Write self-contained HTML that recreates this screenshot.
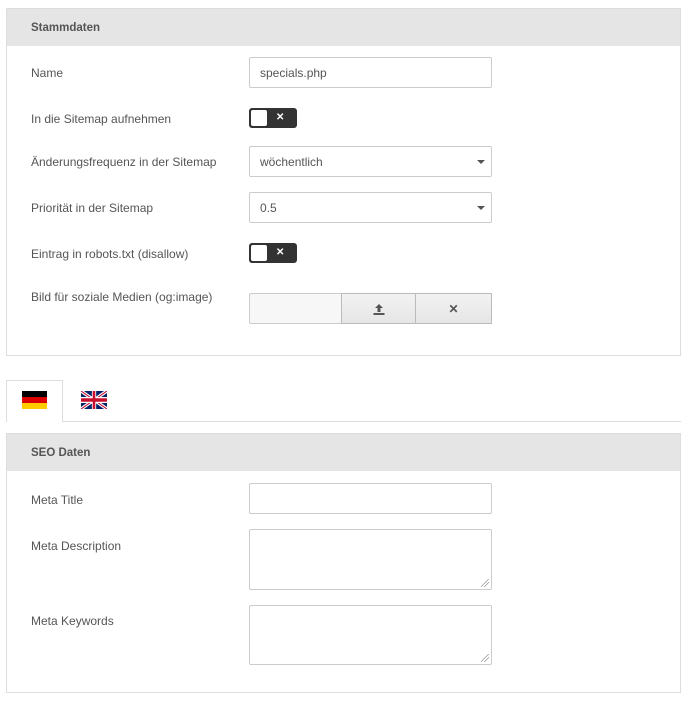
<!DOCTYPE html><html><head><style>
body{margin:0;background:#fff;font-family:"Liberation Sans",Arial,sans-serif;font-size:12px;color:#555;width:698px;height:701px;position:relative;overflow:hidden}
.a{position:absolute}
.panel{position:absolute;left:6px;width:673px;border:1px solid #ddd;background:#fff}
.hd{height:37px;background:#e5e5e5;font-weight:bold;font-size:11.5px;color:#555;line-height:39px;padding-left:24px}
.lb{position:absolute;left:31px}
.in{position:absolute;left:249px;width:243px;border:1px solid #ccc;border-radius:2px;background:#fff;box-sizing:border-box}
.tg{position:absolute;left:249px;width:48px;height:20px;background:#333;border-radius:3px}
.tg:before{content:"";position:absolute;left:2px;top:2px;width:16px;height:16px;background:#fff;border-radius:2px}
.tg:after{content:"✕";position:absolute;left:27px;top:4px;color:#fff;font-weight:bold;font-size:10px}
.car{position:absolute;right:6px;top:13px;border:4px solid transparent;border-top:4px solid #555;border-bottom:0}
.rs{position:absolute;right:2px;bottom:2px;width:8px;height:8px;background:linear-gradient(135deg,transparent 45%,#999 45%,#999 52%,transparent 52%,transparent 68%,#999 68%,#999 75%,transparent 75%)}
</style></head><body>
<div class="panel" style="top:8px;height:346px">
<div class="hd">Stammdaten</div></div>
<div class="lb" style="top:66px">Name</div>
<div class="in" style="top:57px;height:31px;padding:8px 10px">specials.php</div>
<div class="lb" style="top:112px">In die Sitemap aufnehmen</div>
<div class="tg" style="top:108px"></div>
<div class="lb" style="top:155px">Änderungsfrequenz in der Sitemap</div>
<div class="in" style="top:146px;height:31px;padding:8px 10px">wöchentlich<span class="car"></span></div>
<div class="lb" style="top:201px">Priorität in der Sitemap</div>
<div class="in" style="top:192px;height:31px;padding:8px 10px">0.5<span class="car"></span></div>
<div class="lb" style="top:247px">Eintrag in robots.txt (disallow)</div>
<div class="tg" style="top:243px"></div>
<div class="lb" style="top:290px">Bild für soziale Medien (og:image)</div>
<div class="a" style="left:249px;top:293px;width:243px;height:31px;border:1px solid #ccc;box-sizing:border-box;border-radius:2px;background:#f7f7f7"></div>
<div class="a" style="left:341px;top:293px;width:75px;height:31px;border:1px solid #bbb;box-sizing:border-box;background:linear-gradient(#f2f2f2,#e6e6e6);text-align:center">
<svg width="12" height="12" viewBox="0 0 12 12" style="margin-top:9px"><path d="M6 1L2 5h2.5v4h3V5H10z M0.5 10h11v2h-11z" fill="#555"/></svg></div>
<div class="a" style="left:416px;top:293px;width:76px;height:31px;border:1px solid #bbb;border-left:0;box-sizing:border-box;background:linear-gradient(#f2f2f2,#e6e6e6);text-align:center;line-height:31px;font-weight:bold;color:#555">✕</div>
<div class="a" style="left:6px;top:421px;width:675px;border-top:1px solid #ddd"></div>
<div class="a" style="left:6px;top:380px;width:57px;height:42px;border:1px solid #ddd;border-bottom:0;box-sizing:border-box;background:#fff"></div>
<div class="a" style="left:22px;top:391px;width:25px;height:18px;background:linear-gradient(#000 33%,#d00 33%,#d00 66%,#fc0 66%)"></div>
<svg class="a" style="left:81px;top:391px" width="26" height="18" viewBox="0 0 60 30" preserveAspectRatio="none"><rect width="60" height="30" fill="#012169"/><path d="M0 0L60 30M60 0L0 30" stroke="#fff" stroke-width="6"/><path d="M0 0L60 30M60 0L0 30" stroke="#c8102e" stroke-width="2"/><path d="M30 0v30M0 15h60" stroke="#fff" stroke-width="10"/><path d="M30 0v30M0 15h60" stroke="#c8102e" stroke-width="6"/></svg>
<div class="panel" style="top:433px;height:258px"><div class="hd">SEO Daten</div></div>
<div class="lb" style="top:493px">Meta Title</div>
<div class="in" style="top:483px;height:31px"></div>
<div class="lb" style="top:539px">Meta Description</div>
<div class="in" style="top:529px;height:61px"><span class="rs"></span></div>
<div class="lb" style="top:614px">Meta Keywords</div>
<div class="in" style="top:605px;height:60px"><span class="rs"></span></div>
</body></html>
